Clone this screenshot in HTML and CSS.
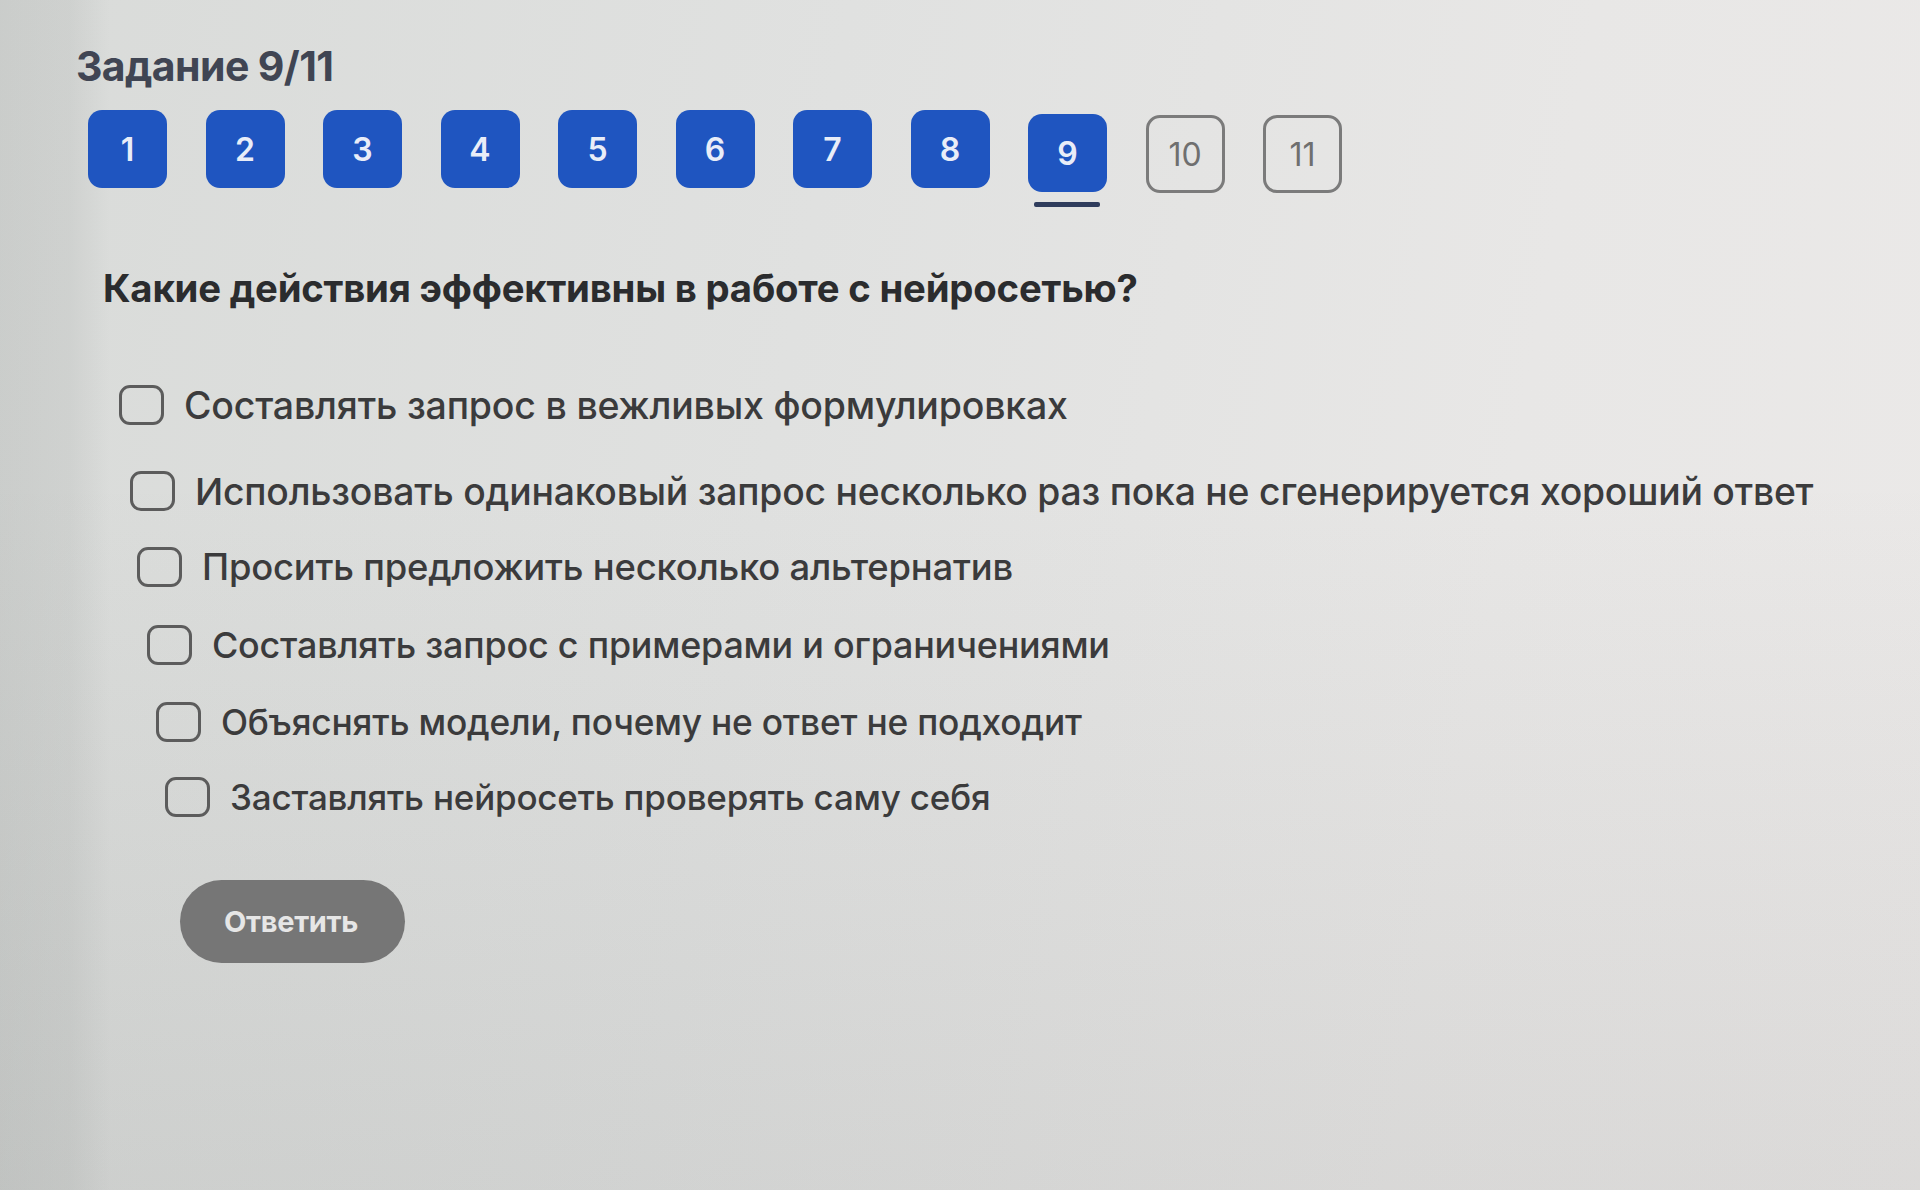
FILE: index.html
```html
<!DOCTYPE html>
<html lang="ru">
<head>
<meta charset="utf-8">
<title>Задание 9/11</title>
<link rel="stylesheet" href="styles.css">
</head>
<body>
<div class="page">
  <h1 class="title">Задание 9/11</h1>
  <nav class="steps">
    <span class="step done">1</span>
    <span class="step done">2</span>
    <span class="step done">3</span>
    <span class="step done">4</span>
    <span class="step done">5</span>
    <span class="step done">6</span>
    <span class="step done">7</span>
    <span class="step done">8</span>
    <span class="step done current">9</span>
    <span class="step todo">10</span>
    <span class="step todo">11</span>
  </nav>
  <h2 class="question">Какие действия эффективны в работе с нейросетью?</h2>
  <ul class="options">
    <li class="option"><span class="box"></span><span class="label">Составлять запрос в вежливых формулировках</span></li>
    <li class="option"><span class="box"></span><span class="label">Использовать одинаковый запрос несколько раз пока не сгенерируется хороший ответ</span></li>
    <li class="option"><span class="box"></span><span class="label">Просить предложить несколько альтернатив</span></li>
    <li class="option"><span class="box"></span><span class="label">Составлять запрос с примерами и ограничениями</span></li>
    <li class="option"><span class="box"></span><span class="label">Объяснять модели, почему не ответ не подходит</span></li>
    <li class="option"><span class="box"></span><span class="label">Заставлять нейросеть проверять саму себя</span></li>
  </ul>
  <button class="submit" type="button">Ответить</button>
</div>
</body>
</html>
```

FILE: styles.css
```css
* { box-sizing: border-box; }

html, body { height: 100%; }

body {
  margin: 0;
  font-family: Inter, "Noto Sans", "Liberation Sans", sans-serif;
  background:
    linear-gradient(90deg, rgba(150,154,152,0.22) 0, rgba(150,154,152,0.16) 70px, rgba(150,154,152,0) 110px),
    linear-gradient(180deg, rgba(0,0,0,0) 0, rgba(0,0,0,0) 40%, rgba(60,64,62,0.09) 100%),
    linear-gradient(100deg, #d9dbd9 0%, #e0e1e0 40%, #e8e7e6 75%, #ebe9e8 100%);
  overflow: hidden;
}

.page {
  padding: 44px 0 0 76px;
  display: flex;
  flex-direction: column;
  align-items: flex-start;
}

.title {
  margin: 0;
  font-size: 41px;
  line-height: 44px;
  font-weight: 700;
  color: #404553;
  letter-spacing: -0.6px;
}

.steps {
  display: flex;
  gap: 38.5px;
  margin: 22px 0 0 12px;
}

.step {
  position: relative;
  width: 79px;
  height: 78px;
  border-radius: 14px;
  display: flex;
  align-items: center;
  justify-content: center;
  font-size: 32px;
  font-weight: 600;
}

.step.done {
  background: #1f55c0;
  color: #e9edf8;
}

.step.todo {
  border: 3px solid #7b7b7b;
  color: #6f6f6f;
  font-weight: 400;
  margin-top: 5px;
}

.step.current { margin-top: 4px; }

.step.current::after {
  content: "";
  position: absolute;
  left: 6px;
  right: 7px;
  bottom: -15px;
  height: 5px;
  border-radius: 2px;
  background: #2f3c5c;
}

.question {
  margin: 72px 0 0 27px;
  font-size: 38.3px;
  line-height: 46px;
  font-weight: 700;
  color: #2b2c2e;
  letter-spacing: -0.2px;
}

.options {
  list-style: none;
  margin: 71px 0 0 0;
  padding: 0;
  display: flex;
  flex-direction: column;
  gap: 32px;
}

.option {
  display: flex;
  align-items: center;
  gap: 20px;
  height: 46px;
}

.option:nth-child(1) { margin-left: 43px; }
.option:nth-child(2) { margin-left: 54px; margin-top: 8px; }
.option:nth-child(3) { margin-left: 61px; margin-top: -2px; }
.option:nth-child(4) { margin-left: 71px; }
.option:nth-child(5) { margin-left: 80px; margin-top: -1px; }
.option:nth-child(6) { margin-left: 89px; margin-top: -3px; }

.box {
  flex: none;
  width: 45px;
  height: 40px;
  border: 3.5px solid #5c5c5c;
  border-radius: 11px;
}

.label {
  font-size: 37.5px;
  font-weight: 500;
  color: #3b3b3c;
  white-space: nowrap;
  letter-spacing: -0.2px;
}

.option:nth-child(2) .label { font-size: 37.3px; }
.option:nth-child(3) .label { font-size: 36.4px; }
.option:nth-child(4) .label { font-size: 35.9px; }
.option:nth-child(5) .label { font-size: 35.3px; }
.option:nth-child(6) .label { font-size: 35px; }

.submit {
  margin: 60px 0 0 104px;
  width: 225px;
  height: 83px;
  border: none;
  border-radius: 42px;
  background: #767676;
  color: #e6e6e6;
  font-family: Inter, "Noto Sans", "Liberation Sans", sans-serif;
  font-size: 29px;
  font-weight: 700;
  text-align: left;
  padding: 0 0 0 44px;
  letter-spacing: -0.3px;
}
```
